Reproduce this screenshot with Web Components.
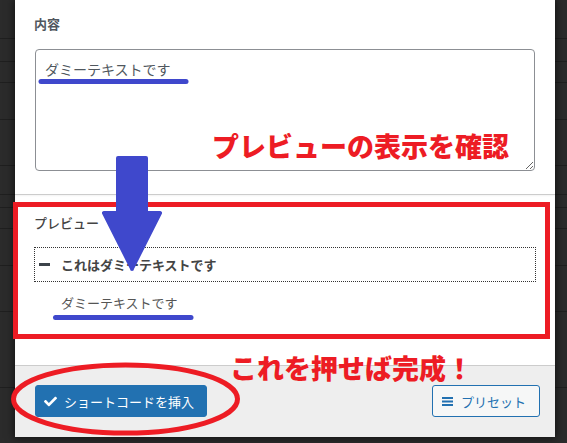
<!DOCTYPE html>
<html lang="ja">
<head>
<meta charset="utf-8">
<title>プレビュー</title>
<style>
    html, body { margin: 0; height: 100%; background: #2b2b2b; }
    body { overflow: hidden; font-family: "Noto Sans CJK JP", "Noto Sans", sans-serif; }
</style>
</head>
<body>
<dialog-page>
    <shortcode-modal>
        <content-field slot="body" label="内容" value="ダミーテキストです"></content-field>
        <preview-panel slot="preview" title="これはダミーテキストです">ダミーテキストです</preview-panel>
        <modal-button slot="actions" variant="primary" icon="check">ショートコードを挿入</modal-button>
        <modal-button slot="actions" variant="secondary" icon="bars">プリセット</modal-button>
    </shortcode-modal>
    <ink-marks></ink-marks>
</dialog-page>

<script>
    // Dark list rows showing behind the modal
    const ROW_LINES = [38, 61, 82, 119, 165, 194, 207, 228, 265, 311, 387];

    class DialogPage extends HTMLElement {
        constructor() {
            super();
            this.attachShadow({ mode: 'open' });
            const lines = ROW_LINES.map(y => `linear-gradient(#1f1f1f, #1f1f1f) 0 ${y}px / 100% 1px no-repeat`).join(', ');
            this.shadowRoot.innerHTML = `
                <style>
                :host {
                    display: block;
                    position: relative;
                    width: 567px;
                    height: 443px;
                    padding-left: 15px;
                    box-sizing: border-box;
                    overflow: hidden;
                    background: ${lines}, #2b2b2b;
                }
                </style>
                <slot></slot>
            `;
        }
    }

    class ShortcodeModal extends HTMLElement {
        constructor() {
            super();
            this.attachShadow({ mode: 'open' });
            this.shadowRoot.innerHTML = `
                <style>
                :host {
                    display: flex;
                    flex-direction: column;
                    width: 540px;
                    height: 437px;
                    background: #fff;
                    box-shadow: 0 0 8px 1px rgba(0, 0, 0, .6);
                }
                .body { height: 194px; padding: 0 20px; box-sizing: border-box; }
                .preview {
                    height: 171px;
                    padding: 0 19px;
                    box-sizing: border-box;
                    border-top: 1px solid #ccc;
                    box-shadow: inset 0 1px 2px rgba(0, 0, 0, .05);
                }
                .actions {
                    flex: 1;
                    display: flex;
                    justify-content: space-between;
                    align-items: flex-start;
                    padding: 19px 15px 0 20px;
                    background: #eee;
                    border-top: 1px solid #ccc;
                }
                </style>
                <div class="body"><slot name="body"></slot></div>
                <div class="preview"><slot name="preview"></slot></div>
                <div class="actions"><slot name="actions"></slot></div>
            `;
        }
    }

    class ContentField extends HTMLElement {
        constructor() {
            super();
            this.attachShadow({ mode: 'open' });
            this.shadowRoot.innerHTML = `
                <style>
                :host { display: block; padding-top: 14px; }
                label {
                    display: block;
                    height: 35px;
                    margin-left: -1px;
                    font: 700 13px/20px "Noto Sans CJK JP", sans-serif;
                    color: #50575e;
                }
                textarea {
                    display: block;
                    width: 500px;
                    height: 122px;
                    box-sizing: border-box;
                    margin: 0;
                    padding: 6px 9px;
                    border: 1px solid #8c8f94;
                    border-radius: 4px;
                    outline: 0;
                    font: 400 14px/26px "Noto Sans CJK JP", sans-serif;
                    color: #50575e;
                    background: #fff;
                }
                </style>
                <label></label>
                <textarea spellcheck="false"></textarea>
            `;
            this.shadowRoot.querySelector('label').textContent = this.getAttribute('label');
            this.shadowRoot.querySelector('textarea').textContent = this.getAttribute('value');
        }
    }

    class PreviewPanel extends HTMLElement {
        constructor() {
            super();
            this.attachShadow({ mode: 'open' });
            this.shadowRoot.innerHTML = `
                <style>
                :host {
                    display: block;
                    padding-top: 23px;
                    color: #50575e;
                    font: 400 13px/20px "Noto Sans CJK JP", sans-serif;
                }
                h3 { margin: 0 0 19px; font: inherit; font-weight: 500; height: 10px; line-height: 10px; color: #444; }
                .head {
                    display: flex;
                    align-items: center;
                    gap: 11px;
                    height: 35px;
                    box-sizing: border-box;
                    padding-left: 4px;
                    width: 502px;
                    border: 1px dotted #333;
                    font-weight: 700;
                    color: #444;
                }
                .minus { width: 11px; height: 3px; background: #3c434a; }
                .text { padding: 11px 0 0 27px; color: #555; }
                </style>
                <h3>プレビュー</h3>
                <div class="head"><span class="minus"></span><span class="title"></span></div>
                <div class="text"><slot></slot></div>
            `;
            this.shadowRoot.querySelector('.title').textContent = this.getAttribute('title');
        }
    }

    const ICONS = {
        check: '<svg width="13" height="13" viewBox="0 0 512 512"><path fill="currentColor" d="M173.898 439.404l-166.4-166.4c-9.997-9.997-9.997-26.206 0-36.204l36.203-36.204c9.997-9.998 26.207-9.998 36.204 0L192 312.69 432.095 72.596c9.997-9.997 26.207-9.997 36.204 0l36.203 36.204c9.997 9.997 9.997 26.206 0 36.204l-294.4 294.401c-9.998 9.997-26.207 9.997-36.204-.001z"/></svg>',
        bars: '<svg width="11" height="11" viewBox="0 0 11 11"><path fill="currentColor" d="M0 1h11v2H0zM0 4.5h11v2H0zM0 8h11v2H0z"/></svg>'
    };

    class ModalButton extends HTMLElement {
        constructor() {
            super();
            this.attachShadow({ mode: 'open' });
            const icon = ICONS[this.getAttribute('icon')] || '';
            this.shadowRoot.innerHTML = `
                <style>
                :host { display: block; }
                button {
                    display: flex;
                    align-items: center;
                    height: 32px;
                    box-sizing: border-box;
                    margin: 0;
                    border: 1px solid #2271b1;
                    border-radius: 3px;
                    font: 400 13px/1 "Noto Sans CJK JP", sans-serif;
                }
                :host([variant="primary"]) button {
                    width: 172px;
                    padding: 0 0 0 8px;
                    gap: 7px;
                    background: #2271b1;
                    color: #fff;
                }
                :host([variant="secondary"]) button {
                    width: 108px;
                    padding: 0 0 0 9px;
                    gap: 8px;
                    background: #f6f7f7;
                    color: #2271b1;
                }
                svg { flex: none; }
                </style>
                <button type="button">${icon}<slot></slot></button>
            `;
        }
    }

    // Red and blue marks someone drew over the screenshot
    class InkMarks extends HTMLElement {
        constructor() {
            super();
            this.attachShadow({ mode: 'open' });
            this.shadowRoot.innerHTML = `
                <style>
                :host { position: absolute; inset: 0; display: block; pointer-events: none; }
                svg { position: absolute; left: 0; top: 0; }
                .note {
                    position: absolute;
                    white-space: nowrap;
                    font: 900 27px/1 "Noto Sans CJK JP", sans-serif;
                    color: #ed1c24;
                }
                .check { left: 212px; top: 132px; }
                .finish { left: 230px; top: 354px; }
                </style>
                <svg width="567" height="443" viewBox="0 0 567 443" fill="none" shape-rendering="crispEdges">
                    <rect x="15.5" y="204.5" width="532" height="132" stroke="#ed1c24" stroke-width="5"/>
                    <g shape-rendering="auto">
                        <ellipse cx="125.5" cy="399" rx="112" ry="34" stroke="#ed1c24" stroke-width="5"/>
                        <path d="M41 81.5H186" stroke="#3f48cc" stroke-width="5" stroke-linecap="round"/>
                        <path d="M55.5 317.5H191" stroke="#3f48cc" stroke-width="5" stroke-linecap="round"/>
                        <path fill="#3f48cc" d="M118 156h28a2 2 0 0 1 2 2v53h12a2 2 0 0 1 2 2.500L134 269a2 2 0 0 1-4 0L102 213.500a2 2 0 0 1 2-2.500h12v-53a2 2 0 0 1 2-2z"/>
                    </g>
                </svg>
                <div class="note check">プレビューの表示を確認</div>
                <div class="note finish">これを押せば完成！</div>
            `;
        }
    }

    customElements.define('dialog-page', DialogPage);
    customElements.define('shortcode-modal', ShortcodeModal);
    customElements.define('content-field', ContentField);
    customElements.define('preview-panel', PreviewPanel);
    customElements.define('modal-button', ModalButton);
    customElements.define('ink-marks', InkMarks);
</script>
</body>
</html>
